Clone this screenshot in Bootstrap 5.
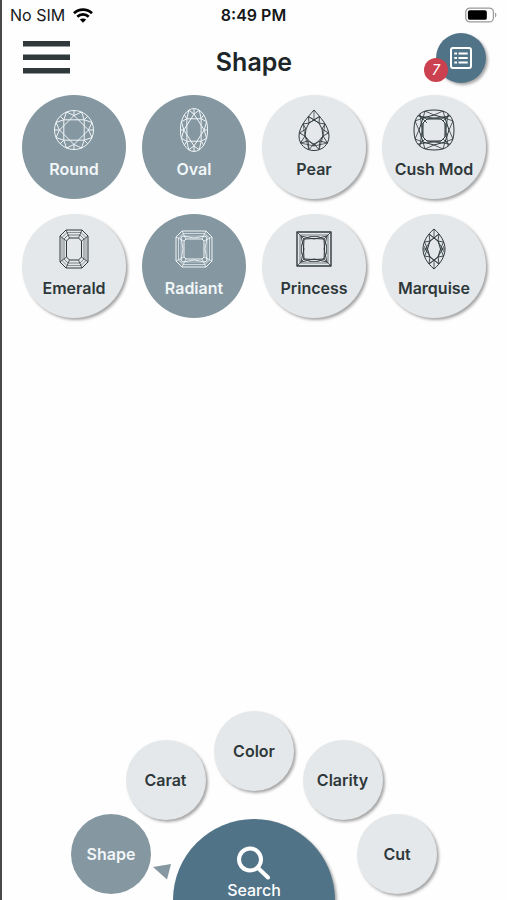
<!DOCTYPE html>
<html lang="en">
<head>
<meta charset="utf-8">
<meta name="viewport" content="width=device-width, initial-scale=1">
<title>Shape</title>
<link rel="stylesheet" href="https://cdn.jsdelivr.net/npm/bootstrap@5.3.0/dist/css/bootstrap.min.css">
<style>
  :root { --slate: #8597a1; --steel: #517388; --mist: #e5e8ea; --ink: #2e383b; }
  body { font-family: Inter, "Liberation Sans", sans-serif; color: var(--ink); background: #fefefe; }
  .screen { border-left: 2px solid #48484b; overflow: hidden; }
  .status { height: 30px; padding: 0 10px 0 8px; font-size: 16px; line-height: 30px; color: #161819; }
  .status svg, .disc svg, .burger svg, .list-btn svg, .pointer { display: block; flex: none; }
  .side { flex: 1 1 0; }
  .top { height: 65px; padding: 0 21px 0 20px; }
  .burger { width: 48px; height: 55px; color: #2f393b; }
  .title { font-size: 25px; line-height: 32px; font-weight: 600; color: #1c2628; margin-top: 16px; }
  .list-btn { width: 50px; height: 50px; background: var(--steel); margin-top: 3px; box-shadow: 2px 2px 3px rgba(0,0,0,.35); }
  .count { position: absolute; left: -12px; bottom: 1px; width: 24px; height: 24px; background: #cb414f; font-size: 14px; line-height: 24px; }
  .shapes { padding: 0 13px 0 12px; row-gap: 15px; }
  .disc { width: 104px; height: 104px; background: var(--mist); color: var(--ink); padding: 13px 0 18px; font-size: 16px; line-height: 24px; font-weight: 600; box-shadow: 2px 2px 3px rgba(0,0,0,.35); white-space: nowrap; }
  .disc .gem { height: 44px; margin-bottom: 5px; }
  .gem svg { fill: none; stroke: currentColor; stroke-width: 1; stroke-linejoin: round; overflow: visible; }
  #brilliant * { vector-effect: non-scaling-stroke; }
  .disc.chosen { background: var(--slate); color: #f1f6f8; box-shadow: none; }
  .step { width: 80px; height: 80px; padding: 0; }
  .tier-two { gap: 97px; margin-top: -51px; }
  .tier-three { height: 86px; margin-top: -6px; }
  .dial { padding-right: 1px; }
  .pointer { width: 18px; height: 16px; margin: 50px 2px 0; }
  .search { width: 162px; height: 162px; margin: 5px 22px 0 0; padding: 27px 0 0; background: var(--steel); color: #fff; font-size: 16px; line-height: 20px; font-weight: 500; box-shadow: 2px 2px 3px rgba(0,0,0,.35); }
</style>
<script src="https://cdn.jsdelivr.net/npm/bootstrap@5.3.0/dist/js/bootstrap.bundle.min.js"></script>
</head>
<body>
<svg width="0" height="0" class="position-absolute" aria-hidden="true">
  <symbol id="brilliant" viewBox="-20 -20 40 40" preserveAspectRatio="none">
    <circle r="19.5"/>
    <path d="M14.5 0L0 14.5-14.5 0 0-14.5ZM10.2-10.2V10.2H-10.2V-10.2Z"/>
    <path d="M14.5 0L18 7.5 10.2 10.2 7.5 18 0 14.5-7.5 18-10.2 10.2-18 7.5-14.5 0-18-7.5-10.2-10.2-7.5-18 0-14.5 7.5-18 10.2-10.2 18-7.5Z"/>
    <path d="M14.5 0H19.5M-14.5 0H-19.5M0 14.5V19.5M0-14.5V-19.5M10.2 10.2L13.8 13.8M-10.2 10.2L-13.8 13.8M10.2-10.2L13.8-13.8M-10.2-10.2L-13.8-13.8"/>
  </symbol>
</svg>
<div class="screen min-vh-100 d-flex flex-column">
  <div class="status d-flex align-items-center">
    <div class="side d-flex align-items-center gap-2"><span>No SIM</span>
      <svg width="20" height="15" viewBox="0 0 20 15" fill="none" stroke="#000" stroke-width="2.7" aria-label="Wi-Fi"><path d="M1 5.2C6 .3 14 .3 19 5.2M4.3 8.7C7.4 5.6 12.6 5.6 15.7 8.7"/><path d="M10 14.8L6.8 11.6C8.5 10 11.5 10 13.2 11.6Z" fill="#000" stroke="none"/></svg>
    </div>
    <div class="fw-semibold">8:49 PM</div>
    <div class="side d-flex justify-content-end">
      <svg width="32" height="16" viewBox="0 0 33 16" aria-label="Battery"><rect x=".8" y=".8" width="28.5" height="14.4" rx="4.2" fill="#fff" stroke="#999" stroke-width="1.3"/><rect x="3" y="3" width="19.5" height="10" rx="2" fill="#000"/><path d="M31 5.5C32.8 6.3 32.8 9.7 31 10.5Z" fill="#999"/></svg>
    </div>
  </div>

  <header class="top d-flex align-items-start">
    <div class="side"><button class="burger btn border-0 p-0" aria-label="Menu"><svg width="48" height="55" viewBox="0 0 48 55" fill="currentColor"><path d="M1 11H48V16.5H1ZM1 24.5H48V30H1ZM1 38H48V43.5H1Z"/></svg></button></div>
    <h1 class="title mb-0">Shape</h1>
    <div class="side d-flex justify-content-end">
      <button class="list-btn btn border-0 rounded-circle p-0 position-relative d-flex align-items-center justify-content-center" aria-label="Selected list">
        <svg width="24" height="24" viewBox="0 0 24 24" fill="none" stroke="#fff" stroke-width="2"><rect x="2" y="2" width="20" height="20" rx="2"/><path d="M5.3 7.5H8M5.3 12H8M5.3 16.5H8M9.5 7.5H18.7M9.5 12H18.7M9.5 16.5H18.7"/></svg>
        <span class="count rounded-circle text-white fst-italic">7</span>
      </button>
    </div>
  </header>

  <main class="shapes d-flex flex-wrap">
    <div class="col-3 d-flex justify-content-center"><button class="disc chosen btn border-0 rounded-circle" aria-pressed="true">
      <span class="gem d-flex align-items-center justify-content-center"><svg width="40" height="40"><use href="#brilliant"/></svg></span>Round</button></div>
    <div class="col-3 d-flex justify-content-center"><button class="disc chosen btn border-0 rounded-circle" aria-pressed="true">
      <span class="gem d-flex align-items-center justify-content-center"><svg width="28" height="44"><use href="#brilliant"/></svg></span>Oval</button></div>
    <div class="col-3 d-flex justify-content-center"><button class="disc btn border-0 rounded-circle">
      <span class="gem d-flex align-items-center justify-content-center"><svg width="32" height="42" viewBox="0 0 32 42">
        <path d="M16 1C22 8 31 17 31 27C31 36 24 41.5 16 41.5S1 36 1 27C1 17 10 8 16 1Z"/>
        <path d="M16 11L21 14 24 20 25 27 22 32 16 35 10 32 7 27 8 20 11 14Z"/>
        <path d="M16 11L21.500 7.500 21 14 27 15 24 20 30.500 24 25 27 29.500 34 22 32 21 40.500 16 35 11 40.500 10 32 2.500 34 7 27 1.500 24 8 20 5 15 11 14 10.500 7.500Z" stroke-width=".9"/>
        <path d="M16 1V11M10.500 7.500L21 14M21.500 7.500L11 14M5 15L7 27 11 40.500M27 15L25 27 21 40.500M7 27L16 37 25 27M2.500 34L16 37 29.500 34" stroke-width=".7"/></svg></span>Pear</button></div>
    <div class="col-3 d-flex justify-content-center"><button class="disc btn border-0 rounded-circle">
      <span class="gem d-flex align-items-center justify-content-center"><svg width="42" height="42" viewBox="0 0 42 42">
        <path d="M21 1C35 1 41 7 41 21S35 41 21 41S1 35 1 21S7 1 21 1Z"/>
        <path d="M14 10H28L32 14V28L28 32H14L10 28V14Z"/>
        <path d="M21 6L32 9 36 21 32 33 21 36 10 33 6 21 10 9Z"/>
        <path d="M12 2L21 6 30 2 32 9 40 12 36 21 40 30 32 33 30 40 21 36 12 40 10 33 2 30 6 21 2 12 10 9Z" stroke-width=".8"/>
        <path d="M5 7L28 10 36 7M37 7L14 10 6 7M5 35L28 32M37 35L14 32M7 5L10 28M7 37L10 14M35 5L32 28M35 37L32 14M6 6L14 14M36 6L30 12M6 36L12 30M36 36L30 30" stroke-width=".8"/></svg></span>Cush Mod</button></div>
    <div class="col-3 d-flex justify-content-center"><button class="disc btn border-0 rounded-circle">
      <span class="gem d-flex align-items-center justify-content-center"><svg width="30" height="40" viewBox="0 0 30 40">
        <path d="M7 1H23L29 7V33L23 39H7L1 33V7Z"/>
        <path d="M8 3.500H22L27 8.500V31.500L22 36.500H8L3 31.500V8.500Z" stroke-width=".5"/>
        <path d="M9 6H21L25 10V30L21 34H9L5 30V10Z" stroke-width=".6"/>
        <path d="M10.500 9H19.500L22.500 12V28L19.500 31H10.500L7.500 28V12Z"/>
        <path d="M7 1L10.500 9M23 1L19.500 9M29 7L22.500 12M29 33L22.500 28M23 39L19.500 31M7 39L10.500 31M1 33L7.500 28M1 7L7.500 12" stroke-width=".8"/></svg></span>Emerald</button></div>
    <div class="col-3 d-flex justify-content-center"><button class="disc chosen btn border-0 rounded-circle" aria-pressed="true">
      <span class="gem d-flex align-items-center justify-content-center"><svg width="38" height="38" viewBox="0 0 38 38">
        <path d="M7 1H31L37 7V31L31 37H7L1 31V7Z"/>
        <path d="M8 3.500H30L34.500 8V30L30 34.500H8L3.500 30V8Z" stroke-width=".7"/>
        <path d="M8 6L19 8 30 6 32 8 30 19 32 30 30 32 19 30 8 32 6 30 8 19 6 8Z" stroke-width=".9"/>
        <path d="M11 9H27L29 11V27L27 29H11L9 27V11Z"/>
        <path d="M6 6H32V32H6Z" stroke-width=".5"/>
        <path d="M7 1L11 9M31 1L27 9M37 7L29 11M37 31L29 27M31 37L27 29M7 37L11 29M1 31L9 27M1 7L9 11" stroke-width=".8"/></svg></span>Radiant</button></div>
    <div class="col-3 d-flex justify-content-center"><button class="disc btn border-0 rounded-circle">
      <span class="gem d-flex align-items-center justify-content-center"><svg width="36" height="36" viewBox="0 0 36 36">
        <path d="M1 1H35V35H1Z" stroke-width="1.400"/><path d="M4 4H32V32H4Z" stroke-width=".6"/>
        <path d="M8 8Q18 7 28 8Q29 18 28 28Q18 29 8 28Q7 18 8 8Z"/>
        <path d="M5 5L18 8 31 5 28 18 31 31 18 28 5 31 8 18Z" stroke-width=".9"/>
        <path d="M1 1L8 8M35 1L28 8M35 35L28 28M1 35L8 28M8 8L5.500 14V22L8 28 14 30.500H22L28 28 30.500 22V14L28 8 22 5.500H14Z" stroke-width=".8"/></svg></span>Princess</button></div>
    <div class="col-3 d-flex justify-content-center"><button class="disc btn border-0 rounded-circle">
      <span class="gem d-flex align-items-center justify-content-center"><svg width="24" height="42" viewBox="0 0 24 42">
        <path d="M12 1C19 7 23 14 23 21S19 35 12 41C5 35 1 28 1 21S5 7 12 1Z"/>
        <path d="M12 10L16 13 18.500 21 16 29 12 32 8 29 5.500 21 8 13Z"/>
        <path d="M12 10L17 6 16 13 21.500 14 18.500 21 21.500 28 16 29 17 36 12 32 7 36 8 29 2.500 28 5.500 21 2.500 14 8 13 7 6Z" stroke-width=".9"/>
        <path d="M12 1V10M12 32V41M7 6L16 13M17 6L8 13M7 36L16 29M17 36L8 29M1 21H5.500M18.500 21H23M8 13L2 24M8 29L2 18M16 13L22 24M16 29L22 18" stroke-width=".8"/></svg></span>Marquise</button></div>
  </main>

  <nav class="dial mt-auto" aria-label="Filter steps">
    <div class="d-flex justify-content-center"><button class="disc step btn border-0 rounded-circle">Color</button></div>
    <div class="tier-two d-flex justify-content-center"><button class="disc step btn border-0 rounded-circle">Carat</button><button class="disc step btn border-0 rounded-circle">Clarity</button></div>
    <div class="tier-three d-flex justify-content-center align-items-start">
      <button class="disc step chosen btn border-0 rounded-circle" aria-current="step">Shape</button>
      <svg class="pointer" viewBox="0 0 18 16" fill="#8597a1" aria-hidden="true"><path d="M0 3L18 0 14 15.5Z"/></svg>
      <button class="search btn border-0 rounded-circle d-flex flex-column align-items-center flex-shrink-0">
        <svg class="flex-shrink-0" width="34" height="34" viewBox="0 0 34 34" fill="none" stroke="#fff" stroke-width="4" stroke-linecap="round"><circle cx="13" cy="13.5" r="11"/><path d="M21 22L31 31.500"/></svg>
        <span>Search</span>
      </button>
      <button class="disc step btn border-0 rounded-circle">Cut</button>
    </div>
  </nav>
</div>
</body>
</html>
